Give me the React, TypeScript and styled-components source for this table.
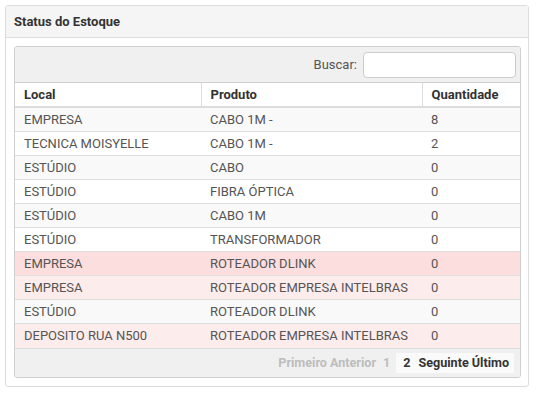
import React from "react";
import styled, { createGlobalStyle } from "styled-components";

const Global = createGlobalStyle`
  html, body { margin: 0; padding: 0; background: #fff; }
  body { font-family: Roboto, "Liberation Sans", Arial, sans-serif; font-size: 13px; color: #555; }
  * { box-sizing: border-box; }
`;

const Panel = styled.section`
  margin: 5px 7px 0 5px;
  border: 1px solid #dcdcdc;
  border-radius: 3px;
  background: #fff;
`;

const PanelHeader = styled.header`
  background: #f5f5f5;
  border-bottom: 1px solid #dcdcdc;
  padding: 8px 8px 8px 8px;
  font-weight: 700;
  font-size: 13px;
  line-height: 15px;
  color: #333;
`;

const PanelBody = styled.div`
  padding: 8px 7px 8px 8px;
`;

const Wrapper = styled.div`
  border: 1px solid #cfcfcf;
  border-radius: 3px;
  overflow: hidden;
`;

const Toolbar = styled.div`
  display: flex;
  justify-content: flex-end;
  align-items: center;
  gap: 6px;
  background: #f0f0f0;
  height: 36px;
  padding: 0 4px 0 0;
  border-bottom: 1px solid #cfcfcf;
`;

const SearchLabel = styled.label`
  color: #555;
  font-size: 13px;
`;

const SearchInput = styled.input`
  width: 153px;
  height: 26px;
  border: 1px solid #ccc;
  border-radius: 4px;
  background: #fff;
  outline: none;
`;

const Table = styled.table`
  width: 100%;
  border-collapse: collapse;
  table-layout: fixed;
`;

const Th = styled.th<{ $w: number; $last?: boolean }>`
  width: ${(p) => p.$w}px;
  text-align: left;
  font-weight: 700;
  color: #333;
  font-size: 13px;
  line-height: 15px;
  padding: 4px 9px 4px 9px;
  border-bottom: 2px solid #dcdcdc;
  border-right: ${(p) => (p.$last ? "none" : "1px solid #dcdcdc")};
  background: #fff;
`;

type Tone = "normal" | "danger";

const Tr = styled.tr<{ $tone: Tone; $odd: boolean }>`
  background: ${(p) =>
    p.$tone === "danger"
      ? p.$odd
        ? "#fcdede"
        : "#fdecec"
      : p.$odd
      ? "#f9f9f9"
      : "#ffffff"};
  border-top: 1px solid #dedede;
  &:first-child { border-top: none; }
`;

const Td = styled.td`
  padding: 4px 9px;
  line-height: 15px;
  height: 24px;
  font-size: 13px;
  color: #555;
  white-space: nowrap;
`;

const Footer = styled.div`
  display: flex;
  justify-content: flex-end;
  align-items: center;
  height: 29px;
  background: #f0f0f0;
  border-top: 1px solid #dcdcdc;
  padding: 0 6px 0 0;
`;

const DisabledGroup = styled.div`
  display: flex;
  align-items: center;
  gap: 3px;
  margin-right: 6px;
`;

const CurrentGroup = styled.div`
  display: flex;
  align-items: center;
  gap: 3px;
  height: 20px;
  padding: 0 5px 0 7px;
  background: #fafafa;
`;

const PageButton = styled.span<{ $active?: boolean; $lead?: number }>`
  font-weight: 700;
  font-size: 12.6px;
  line-height: 20px;
  color: ${(p) => (p.$active ? "#333" : "#bdbdbd")};
  margin-left: ${(p) => p.$lead ?? 0}px;
`;

const rows: { local: string; produto: string; qtd: string; tone: Tone }[] = [
  { local: "EMPRESA", produto: "CABO 1M -", qtd: "8", tone: "normal" },
  { local: "TECNICA MOISYELLE", produto: "CABO 1M -", qtd: "2", tone: "normal" },
  { local: "ESTÚDIO", produto: "CABO", qtd: "0", tone: "normal" },
  { local: "ESTÚDIO", produto: "FIBRA ÓPTICA", qtd: "0", tone: "normal" },
  { local: "ESTÚDIO", produto: "CABO 1M", qtd: "0", tone: "normal" },
  { local: "ESTÚDIO", produto: "TRANSFORMADOR", qtd: "0", tone: "normal" },
  { local: "EMPRESA", produto: "ROTEADOR DLINK", qtd: "0", tone: "danger" },
  { local: "EMPRESA", produto: "ROTEADOR EMPRESA INTELBRAS", qtd: "0", tone: "danger" },
  { local: "ESTÚDIO", produto: "ROTEADOR DLINK", qtd: "0", tone: "normal" },
  { local: "DEPOSITO RUA N500", produto: "ROTEADOR EMPRESA INTELBRAS", qtd: "0", tone: "danger" },
];

export default function App() {
  return (
    <>
      <Global />
      <Panel>
        <PanelHeader>Status do Estoque</PanelHeader>
        <PanelBody>
          <Wrapper>
            <Toolbar>
              <SearchLabel>Buscar:</SearchLabel>
              <SearchInput type="text" />
            </Toolbar>
            <Table>
              <thead>
                <tr>
                  <Th $w={186}>Local</Th>
                  <Th $w={221}>Produto</Th>
                  <Th $w={98} $last>
                    Quantidade
                  </Th>
                </tr>
              </thead>
              <tbody>
                {rows.map((r, i) => (
                  <Tr key={i} $tone={r.tone} $odd={i % 2 === 0}>
                    <Td>{r.local}</Td>
                    <Td>{r.produto}</Td>
                    <Td>{r.qtd}</Td>
                  </Tr>
                ))}
              </tbody>
            </Table>
            <Footer>
              <DisabledGroup>
                <PageButton>Primeiro</PageButton>
                <PageButton>Anterior</PageButton>
                <PageButton $lead={4}>1</PageButton>
              </DisabledGroup>
              <CurrentGroup>
                <PageButton $active>2</PageButton>
                <PageButton $active $lead={5}>Seguinte</PageButton>
                <PageButton $active>Último</PageButton>
              </CurrentGroup>
            </Footer>
          </Wrapper>
        </PanelBody>
      </Panel>
    </>
  );
}
